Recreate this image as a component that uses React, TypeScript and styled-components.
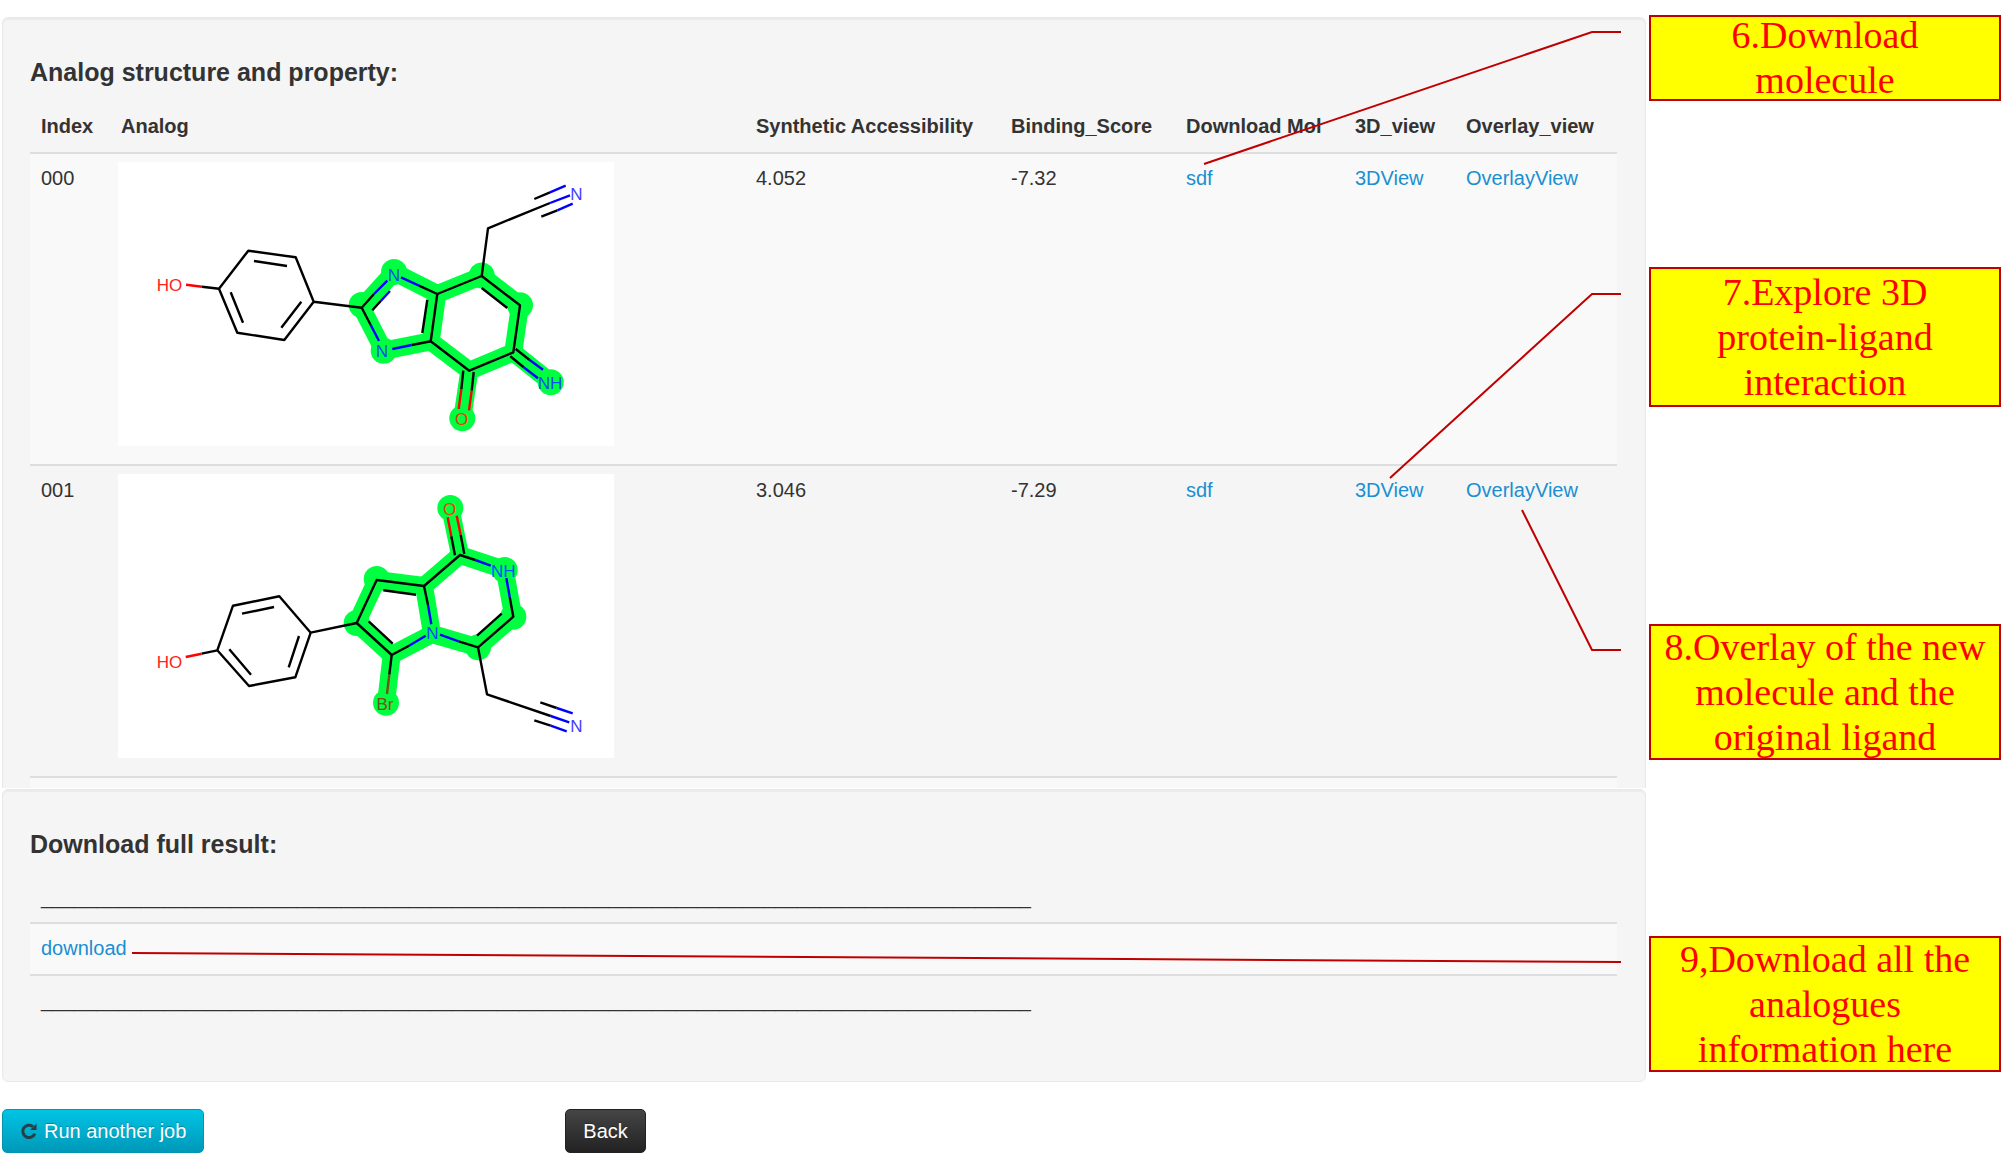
import React from "react";
import styled, { createGlobalStyle } from "styled-components";

const GlobalStyle = createGlobalStyle`
  *, *::before, *::after { box-sizing: border-box; }
  body {
    margin: 0;
    background: #fff;
    color: #333;
    font-family: "Liberation Sans", Arial, Helvetica, sans-serif;
    font-size: 20px;
    line-height: 28px;
  }
`;

const Page = styled.div`
  display: grid;
  grid-template-columns: minmax(0, 1fr) 352px;
  column-gap: 3px;
  padding: 15px 15px 6px 2px;
`;

const Main = styled.main`
  position: relative;
  padding-top: 2px;
`;

const Panel = styled.section<{ $open?: boolean }>`
  padding: 26px 28px ${(p) => (p.$open ? 0 : 55)}px 27px;
  margin-bottom: ${(p) => (p.$open ? 1 : 27)}px;
  background: #f5f5f5;
  border: 1px solid #e9e9e9;
  border-bottom-width: ${(p) => (p.$open ? 0 : 1)}px;
  border-radius: ${(p) => (p.$open ? "6px 6px 0 0" : "6px")};
  box-shadow: inset 0 2px 1px rgba(0, 0, 0, 0.04);
`;

const Heading = styled.h2`
  margin: 0;
  font-size: 25px;
  line-height: 56px;
  font-weight: bold;
`;

const Table = styled.table`
  width: 100%;
  table-layout: fixed;
  border-collapse: separate;
  border-spacing: 0;
`;

const Col = styled.col<{ $width?: number }>`
  width: ${(p) => (p.$width ? `${p.$width}px` : "auto")};
`;

const HeadCell = styled.th`
  padding: 12px 11px;
  text-align: left;
  font-weight: bold;
  white-space: nowrap;
`;

const Row = styled.tr<{ $striped?: boolean }>`
  background: ${(p) => (p.$striped ? "#f9f9f9" : "transparent")};
`;

const Cell = styled.td`
  padding: 10px 11px 12px;
  border-top: 2px solid #dedede;
  vertical-align: top;
`;

const PictureCell = styled(Cell)`
  padding: 8px 8px 18px;
`;

const EmptyCell = styled(Cell)`
  height: 12px;
  padding: 0;
`;

const RuleCell = styled.td<{ $top?: boolean }>`
  padding: ${(p) => (p.$top ? "11px" : "10px 11px 12px")};
  border-top: ${(p) => (p.$top ? "0" : "2px solid #dedede")};
  white-space: nowrap;
`;

const Link = styled.a`
  color: #1a8fd1;
  text-decoration: none;
  &:hover { text-decoration: underline; }
`;

const Molecule = styled.svg`
  display: block;
  width: 496px;
  height: 284px;
  background: #fff;
  font-family: "Liberation Sans", Arial, sans-serif;
  font-size: 17px;
`;

const Actions = styled.div`
  display: flex;
  gap: 361px;
`;

const Button = styled.button<{ $dark?: boolean }>`
  display: inline-flex;
  align-items: center;
  justify-content: center;
  gap: 6px;
  height: 44px;
  padding: 0 17px;
  border: 1px solid ${(p) => (p.$dark ? "#222" : "#0095b3")};
  border-radius: 5px;
  background: ${(p) =>
    p.$dark
      ? "linear-gradient(#454545, #222)"
      : "linear-gradient(#00c4e4, #0098b8)"};
  color: #fff;
  font: inherit;
  text-shadow: 0 -1px 0 rgba(0, 0, 0, 0.25);
  cursor: pointer;
`;

const Notes = styled.aside`
  display: flex;
  flex-direction: column;
`;

const Note = styled.p<{ $height: number; $space?: number }>`
  display: flex;
  align-items: center;
  justify-content: center;
  flex: none;
  height: ${(p) => p.$height}px;
  margin: ${(p) => p.$space ?? 0}px 0 0;
  padding: 0 12px;
  border: 2px solid #c00000;
  background: #ff0;
  color: #f00;
  font-family: "Liberation Serif", "Times New Roman", serif;
  font-size: 38px;
  line-height: 45px;
  text-align: center;
`;

const Pointers = styled.svg<{ $wide?: boolean }>`
  position: absolute;
  top: 0;
  right: 25px;
  width: ${(p) => (p.$wide ? "calc(100% - 155px)" : "420px")};
  height: 980px;
  overflow: visible;
  pointer-events: none;
  fill: none;
  stroke: #c00000;
  stroke-width: 2px;
`;

type Segment = [string, string];
type Dot = [number, number];
type Label = [string, number, number, string];

interface Drawing {
  name: string;
  viewBox: string;
  glow: string;
  dots: Dot[];
  bonds: Segment[];
  labels: Label[];
}

const BLACK = "#000";
const BLUE = "#00f";
const RED = "#f00";
const BROWN = "#7f4c19";

const imidazole: Drawing = {
  name: "Structure of analog 000",
  viewBox: "118 162 496 284",
  glow:
    "M361.7 307.7L394 272L437.3 294L430.7 341.3L383.7 350.7Z M437.3 294L481.7 276L520 305.3L513.3 352.3L469.3 370.7L430.7 341.3 M469.3 370.7L462.3 418.3 M513.3 352.3L550.7 382.3",
  dots: [
    [361.7, 305], [394, 272], [383.7, 350.7], [481.7, 275.5],
    [520, 305.3], [462.3, 418.3], [550.7, 382.3],
  ],
  bonds: [
    [BLACK, "M202 286.7L219 288.7L248.3 250.7L295.7 257.3L313.7 301.7L284.3 340L237.3 332.7L219 288.7 M254 261L287 266 M301.3 301.7L281.3 327.7 M230.7 292.3L243 322.7 M313.7 301.7L361.7 307.7"],
    [BLACK, "M374 294L361.7 307.7L370.7 325 M372.3 310.3L381 300.7 M419 285.7L437.3 294L430.7 341.3L411.7 345 M427.3 299.7L422.3 333"],
    [BLACK, "M437.3 294L481.7 276L520 305.3L513.3 352.3L469.3 370.7L430.7 341.3 M481.7 288L507.3 308"],
    [BLACK, "M463.3 370.7L461.3 389.3 M473.7 372L471.7 390.7 M515.7 349L529.3 359.7 M510.3 356.3L523.7 367.3"],
    [BLACK, "M481.7 276L488 228.3L550 203 M534.3 199L550 192.3 M541.3 216.7L557.3 210.3"],
    [RED, "M186 284.7L202 286.7 M461.3 389.3L458.7 409 M471.7 390.7L469 410.3"],
    [BLUE, "M374 294L387.3 280.7 M381 300.7L390 291 M401 277.3L419 285.7 M411.7 345L392.3 349 M370.7 325L379 341"],
    [BLUE, "M529.3 359.7L543 369.7 M523.7 367.3L538 378.3 M550 203L570 195.3 M550 192.3L565.7 185.7 M557.3 210.3L572.7 203.7"],
  ],
  labels: [
    ["HO", 169.5, 291, "#ff2020"],
    ["N", 394, 281, "#0050ff"],
    ["N", 382, 357, "#0050ff"],
    ["O", 461.5, 425, "#e84000"],
    ["NH", 550, 389, "#0050ff"],
    ["N", 576.3, 200, "#4040ff"],
  ],
};

const pyrrolopyrazine: Drawing = {
  name: "Structure of analog 001",
  viewBox: "118 475 496 284",
  glow:
    "M356.7 624L376.7 581L424 587L432 635L391.7 656Z M424 587L460 556L504.7 570.7L513.3 617.7L478 648.3L432 635 M460 556L450.3 509 M391.7 656L386 703.7",
  dots: [
    [356.7, 624], [376.7, 580], [504.7, 571], [513.3, 617.7],
    [478, 648.3], [450.3, 509], [386, 703.7],
  ],
  bonds: [
    [BLACK, "M201.7 654.7L217.3 651.3L233 606.7L279.3 597.3L310.7 633.7L295.3 678.3L249 687L217.3 651.3 M242 614.7L274 608 M299 637L288.7 668.3 M229.3 650.3L251 675.7 M310.7 633.7L356.7 624"],
    [BLACK, "M428 606L424 587L376.7 581L356.7 624L391.7 656L409 646.7 M383.3 591.3L416 595.7 M368.7 622.3L392.7 644.7 M391.7 656L389.3 675.7"],
    [BLACK, "M424 587L460 556L475.3 561 M509.7 598L513.3 617.7L478 648.3L458.7 642.3 M501.7 614.7L477 636.7"],
    [BLACK, "M455 556.3L451.3 537.3 M464.3 555L460.7 536"],
    [BLACK, "M478 648.3L487 695.3L550.7 717 M540.3 703.3L556.7 709 M534.3 721.3L550.7 726.7"],
    [RED, "M185.7 658L201.7 654.7 M451.3 537.3L447.7 518.3 M460.7 536L456.7 516.7"],
    [BLUE, "M428 606L431.3 625.3 M440 635.7L458.7 642.3 M425.7 636.7L409 646.7 M475.3 561L490.7 566.7 M506.3 579L509.7 598"],
    [BLUE, "M550.7 717L569.3 723.3 M556.7 709L572.7 714.3 M550.7 726.7L566.7 732.3"],
    [BROWN, "M389.3 675.7L387 695"],
  ],
  labels: [
    ["HO", 169.5, 669, "#ff2020"],
    ["N", 432.5, 640, "#0050ff"],
    ["O", 449.7, 516, "#e84000"],
    ["NH", 503.3, 578, "#0050ff"],
    ["Br", 385, 711, BROWN],
    ["N", 576.3, 733, "#4040ff"],
  ],
};

function MoleculeDrawing({ drawing }: { drawing: Drawing }) {
  return (
    <Molecule viewBox={drawing.viewBox} role="img" aria-label={drawing.name}>
      <path d={drawing.glow} fill="none" stroke="#00ff40" strokeWidth="18" strokeLinejoin="round" />
      {drawing.dots.map(([x, y]) => (
        <circle key={`${x}-${y}`} cx={x} cy={y} r="13" fill="#00ff40" />
      ))}
      {drawing.bonds.map(([color, d]) => (
        <path key={d} d={d} fill="none" stroke={color} strokeWidth="2.4" strokeLinejoin="round" />
      ))}
      {drawing.labels.map(([text, x, y, color]) => (
        <text key={`${x}-${y}`} x={x} y={y} fill={color} textAnchor="middle">
          {text}
        </text>
      ))}
    </Molecule>
  );
}

const analogs = [
  { index: "000", drawing: imidazole, access: "4.052", score: "-7.32" },
  { index: "001", drawing: pyrrolopyrazine, access: "3.046", score: "-7.29" },
];

const rule = "_".repeat(89);

function RepeatIcon() {
  return (
    <svg width="18" height="18" viewBox="0 0 18 18" aria-hidden="true">
      <path d="M13 4.6A6.2 6.2 0 1 0 14.8 11.6" fill="none" stroke="#264048" strokeWidth="3" />
      <path d="M16.5 1.5v6.5H10z" fill="#264048" />
    </svg>
  );
}

export default function App() {
  return (
    <>
      <GlobalStyle />
      <Page>
        <Main>
          <Panel $open>
            <Heading>Analog structure and property:</Heading>
            <Table>
              <colgroup>
                <Col $width={80} />
                <Col />
                <Col $width={255} />
                <Col $width={175} />
                <Col $width={169} />
                <Col $width={111} />
                <Col $width={162} />
              </colgroup>
              <thead>
                <tr>
                  <HeadCell>Index</HeadCell>
                  <HeadCell>Analog</HeadCell>
                  <HeadCell>Synthetic Accessibility</HeadCell>
                  <HeadCell>Binding_Score</HeadCell>
                  <HeadCell>Download Mol</HeadCell>
                  <HeadCell>3D_view</HeadCell>
                  <HeadCell>Overlay_view</HeadCell>
                </tr>
              </thead>
              <tbody>
                {analogs.map((analog, i) => (
                  <Row key={analog.index} $striped={i % 2 === 0}>
                    <Cell>{analog.index}</Cell>
                    <PictureCell>
                      <MoleculeDrawing drawing={analog.drawing} />
                    </PictureCell>
                    <Cell>{analog.access}</Cell>
                    <Cell>{analog.score}</Cell>
                    <Cell><Link href="#sdf">sdf</Link></Cell>
                    <Cell><Link href="#view">3DView</Link></Cell>
                    <Cell><Link href="#overlay">OverlayView</Link></Cell>
                  </Row>
                ))}
                <Row $striped>
                  <EmptyCell colSpan={7} />
                </Row>
              </tbody>
            </Table>
          </Panel>

          <Panel>
            <Heading>Download full result:</Heading>
            <Table>
              <tbody>
                <Row><RuleCell $top>{rule}</RuleCell></Row>
                <Row $striped><Cell><Link href="#download">download</Link></Cell></Row>
                <Row><RuleCell>{rule}</RuleCell></Row>
              </tbody>
            </Table>
          </Panel>

          <Actions>
            <Button type="button"><RepeatIcon />Run another job</Button>
            <Button type="button" $dark>Back</Button>
          </Actions>

          <Pointers aria-hidden="true">
            <path d="M3 149L391 17H420" />
            <path d="M189 463L391 279H420" />
            <path d="M321 495L391 635H420" />
          </Pointers>
          <Pointers $wide aria-hidden="true">
            <line x1="0" y1="938" x2="100%" y2="947" />
          </Pointers>
        </Main>

        <Notes>
          <Note $height={86}>6.Download molecule</Note>
          <Note $height={140} $space={166}>7.Explore 3D protein-ligand interaction</Note>
          <Note $height={136} $space={217}>8.Overlay of the new molecule and the original ligand</Note>
          <Note $height={136} $space={176}>9,Download all the analogues information here</Note>
        </Notes>
      </Page>
    </>
  );
}
